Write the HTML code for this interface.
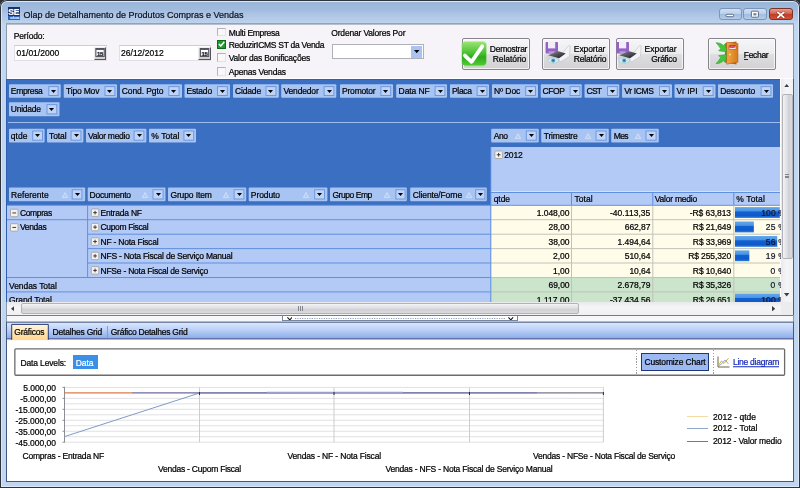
<!DOCTYPE html>
<html lang="pt-BR"><head><meta charset="utf-8"><title>Olap de Detalhamento de Produtos Compras e Vendas</title>
<style>html,body{margin:0;padding:0}body{width:800px;height:488px;overflow:hidden;background:#2c3036;position:relative;font-family:"Liberation Sans", sans-serif;font-size:8.5px;line-height:1}
#w{position:absolute;left:0;top:0;width:800px;height:488px;overflow:hidden;will-change:transform}
#w div,#w svg,#w span{position:absolute;display:block}#w span{white-space:pre;line-height:1;-webkit-text-stroke:0.22px}
#clip{left:0;top:0;width:781px;height:302px;overflow:hidden}</style></head>
<body><div id="w">
<div  style="left:0px;top:0px;width:800px;height:488px;background:#c1d6f0;border-radius:7px 7px 0 0;box-shadow:inset 0 0 0 1px #2e333c, inset 0 0 0 2px #dbe7f6"></div>
<div  style="left:2px;top:2px;width:796px;height:22px;background:linear-gradient(#9ab7da,#9fbadc 30%,#adc4e5 55%,#b5cce9 80%,#bfd5ef);border-radius:5px 5px 0 0"></div>
<div  style="left:7.5px;top:7px;width:12.5px;height:9.4px;background:#17326e"></div>
<div  style="left:7.5px;top:16.4px;width:12.5px;height:3.6px;background:#2d63b8"></div>
<span style="top:11.8px;font-size:8.6px;color:#fff;transform:translateY(-44%);left:8.2px;letter-spacing:-0.134px;font-weight:bold">SE</span>
<span style="top:18px;font-size:4.4px;color:#d6ecff;transform:translateY(-44%);left:10.2px;letter-spacing:0.151px;font-weight:bold">cios</span>
<span style="top:14.5px;font-size:9px;color:#10131c;transform:translateY(-44%);left:23.5px;letter-spacing:-0.003px;">Olap de Detalhamento de Produtos Compras e Vendas</span>
<div  style="left:718.5px;top:7.75px;width:23px;height:12.5px;background:linear-gradient(#cfe0f4,#b9d0ec 48%,#9fbde0 52%,#b4cdea);border:1px solid #7d95b6;border-radius:3px;box-sizing:border-box"></div>
<svg style="left:725px;top:13px" width="10" height="5"><rect x="1.00" y="1.30" width="7.60" height="2.40" rx="0.8" fill="#fff" stroke="#52627e" stroke-width="0.9"/></svg>
<div  style="left:743px;top:7.75px;width:23.5px;height:12.5px;background:linear-gradient(#cfe0f4,#b9d0ec 48%,#9fbde0 52%,#b4cdea);border:1px solid #7d95b6;border-radius:3px;box-sizing:border-box"></div>
<svg style="left:750px;top:10px" width="10" height="9"><rect x="1.40" y="1.20" width="7.00" height="6.00" rx="0.8" fill="#fff" stroke="#52627e" stroke-width="0.9"/></svg>
<svg style="left:752px;top:12px" width="6" height="5"><rect x="1.40" y="1.20" width="3.00" height="2.20" rx="0" fill="#6f7e96"/></svg>
<div  style="left:768.5px;top:7.75px;width:24px;height:12.5px;background:linear-gradient(#e4a093,#d4624c 45%,#c23a22 52%,#d0553c);border:1px solid #7a3326;border-radius:3px;box-sizing:border-box"></div>
<svg style="left:775.5px;top:10.5px" width="10" height="8" viewBox="0 0 10 8"><path d="M1.8 1.4L7.8 6.4M7.8 1.4L1.8 6.4" stroke="#5a2018" stroke-width="2.8" stroke-linecap="round" opacity=".5"/><path d="M1.8 1.4L7.8 6.4M7.8 1.4L1.8 6.4" stroke="#fff" stroke-width="1.7" stroke-linecap="round"/></svg>
<div  style="left:6px;top:23px;width:788px;height:459px;background:#fff;box-shadow:inset 0 0 0 1px #8b97ab"></div>
<div  style="left:7px;top:24px;width:786px;height:54px;background:#f6f4f8"></div>
<svg style="left:5px;top:22px" width="790" height="4"><rect x="1.00" y="1.40" width="788.00" height="1.30" rx="0" fill="#9fa8b8"/></svg>
<span style="top:36px;font-size:8.5px;color:#000;transform:translateY(-44%);left:13.75px;letter-spacing:-0.174px;">Período:</span>
<div  style="left:14px;top:44.5px;width:93px;height:16px;background:#fff;border:1px solid #e2e0e5;border-top-color:#cfcdd3;box-sizing:border-box"></div>
<span style="top:53px;font-size:8.5px;color:#000;transform:translateY(-44%);left:16.5px;letter-spacing:0.020px;">01/01/2000</span>
<div  style="left:93.6px;top:47px;width:12.5px;height:12.8px;background:#d3d1cd;border:1px solid;border-color:#f1efec #54545e #54545e #f1efec;box-sizing:border-box"></div>
<svg style="left:94px;top:47px" width="12" height="11"><rect x="1.90" y="1.50" width="8.30" height="7.90" rx="0" fill="#fff" stroke="#4a4a56" stroke-width="1"/></svg>
<svg style="left:94px;top:47px" width="12" height="4"><rect x="1.90" y="1.50" width="8.30" height="1.50" rx="0" fill="#5c5c68"/></svg>
<span style="top:53.6px;font-size:6px;color:#14141e;transform:translateY(-44%);left:97.1px;letter-spacing:-0.344px;font-weight:bold">15</span>
<div  style="left:118.8px;top:44.5px;width:92.7px;height:16px;background:#fff;border:1px solid #e2e0e5;border-top-color:#cfcdd3;box-sizing:border-box"></div>
<span style="top:53px;font-size:8.5px;color:#000;transform:translateY(-44%);left:121px;letter-spacing:0.020px;">26/12/2012</span>
<div  style="left:198.1px;top:47px;width:12.5px;height:12.8px;background:#d3d1cd;border:1px solid;border-color:#f1efec #54545e #54545e #f1efec;box-sizing:border-box"></div>
<svg style="left:199px;top:47px" width="11" height="11"><rect x="1.40" y="1.50" width="8.30" height="7.90" rx="0" fill="#fff" stroke="#4a4a56" stroke-width="1"/></svg>
<svg style="left:199px;top:47px" width="11" height="4"><rect x="1.40" y="1.50" width="8.30" height="1.50" rx="0" fill="#5c5c68"/></svg>
<span style="top:53.6px;font-size:6px;color:#14141e;transform:translateY(-44%);left:201.6px;letter-spacing:-0.344px;font-weight:bold">15</span>
<div  style="left:217px;top:27.5px;width:9px;height:8.75px;background:#f8f7fa;border:1px solid;border-color:#b4b2b8 #e4e2e8 #e4e2e8 #b4b2b8;box-sizing:border-box"></div>
<div  style="left:217px;top:40px;width:9px;height:8.5px;background:#1f9a2c;border:1px solid #0d6b18;box-sizing:border-box"></div>
<svg style="left:218.2px;top:41.3px" width="7" height="6" viewBox="0 0 7 6"><path d="M0.8 3L2.8 5L6.3 0.8" stroke="#fff" stroke-width="1.5" fill="none"/></svg>
<div  style="left:217px;top:53.25px;width:9px;height:8.5px;background:#f8f7fa;border:1px solid;border-color:#b4b2b8 #e4e2e8 #e4e2e8 #b4b2b8;box-sizing:border-box"></div>
<div  style="left:217px;top:66.75px;width:9px;height:8.75px;background:#f8f7fa;border:1px solid;border-color:#b4b2b8 #e4e2e8 #e4e2e8 #b4b2b8;box-sizing:border-box"></div>
<span style="top:32.5px;font-size:8.5px;color:#000;transform:translateY(-44%);left:228.75px;letter-spacing:-0.275px;">Multi Empresa</span>
<span style="top:44.7px;font-size:8.5px;color:#000;transform:translateY(-44%);left:228.75px;letter-spacing:-0.279px;">ReduzirICMS ST da Venda</span>
<span style="top:58px;font-size:8.5px;color:#000;transform:translateY(-44%);left:228.75px;letter-spacing:-0.209px;">Valor das Bonificações</span>
<span style="top:71.6px;font-size:8.5px;color:#000;transform:translateY(-44%);left:228.75px;letter-spacing:-0.197px;">Apenas Vendas</span>
<span style="top:33.4px;font-size:8.5px;color:#000;transform:translateY(-44%);left:331.25px;letter-spacing:-0.173px;">Ordenar Valores Por</span>
<div  style="left:332.2px;top:44.25px;width:91.5px;height:14.45px;background:#fff;border:1px solid #b0b0ba;box-sizing:border-box"></div>
<div  style="left:411.3px;top:45.6px;width:11.1px;height:12px;background:#a9c4f2"></div>
<svg style="left:414.15px;top:50.2px" width="5.5" height="3.2" viewBox="0 0 5.5 3.2"><path d="M0 0H5.5L2.75 3.2Z" fill="#000"/></svg>
<div  style="left:462px;top:37.7px;width:68px;height:32px;background:linear-gradient(#f6f5f7,#ececee 48%,#dedee0 52%,#d2d2d5);border:1px solid #85858c;border-radius:2px;box-sizing:border-box;box-shadow:inset 0 0 0 1px rgba(255,255,255,.7)"></div>
<div  style="left:542.3px;top:37.7px;width:67.7px;height:32px;background:linear-gradient(#f6f5f7,#ececee 48%,#dedee0 52%,#d2d2d5);border:1px solid #85858c;border-radius:2px;box-sizing:border-box;box-shadow:inset 0 0 0 1px rgba(255,255,255,.7)"></div>
<div  style="left:616.2px;top:37.7px;width:67.4px;height:32px;background:linear-gradient(#f6f5f7,#ececee 48%,#dedee0 52%,#d2d2d5);border:1px solid #85858c;border-radius:2px;box-sizing:border-box;box-shadow:inset 0 0 0 1px rgba(255,255,255,.7)"></div>
<div  style="left:708.4px;top:37.7px;width:67.4px;height:32px;background:linear-gradient(#f6f5f7,#ececee 48%,#dedee0 52%,#d2d2d5);border:1px solid #85858c;border-radius:2px;box-sizing:border-box;box-shadow:inset 0 0 0 1px rgba(255,255,255,.7)"></div>
<svg style="left:460px;top:40px" width="28" height="28" viewBox="0 0 28 28">
<defs><linearGradient id="gg" x1="0" y1="0" x2="0" y2="1"><stop offset="0" stop-color="#96e470"/><stop offset=".5" stop-color="#48be30"/><stop offset=".64" stop-color="#2eaa1c"/><stop offset="1" stop-color="#50cc32"/></linearGradient></defs>
<rect x="1" y="1" width="26" height="25.4" rx="4.5" fill="#8fdc74" opacity=".4"/>
<rect x="2" y="2" width="24.2" height="23.4" rx="3.6" fill="url(#gg)"/>
<path d="M4.9 15.6L11.5 21.8L22.2 6.3" stroke="#fff" stroke-width="3.8" fill="none" stroke-linecap="round" stroke-linejoin="round"/></svg>
<span style="top:49.4px;font-size:8.5px;color:#000;transform:translateY(-44%);left:489.8px;letter-spacing:-0.254px;">Demostrar</span>
<span style="top:59.2px;font-size:8.5px;color:#000;transform:translateY(-44%);left:492.7px;letter-spacing:-0.059px;">Relatório</span>
<svg style="left:544px;top:40px" width="28" height="28" viewBox="0 0 28 28">
<defs><linearGradient id="pg544" x1="0" y1="0" x2="1" y2="1"><stop offset="0" stop-color="#8a8c94"/><stop offset="1" stop-color="#16171c"/></linearGradient></defs>
<rect x="1.6" y="2" width="12.4" height="11.6" rx=".8" fill="#9461c6"/><rect x="4" y="1.8" width="7.2" height="6.6" fill="#f1ecf8"/><rect x="4.6" y="11.2" width="6" height="2.6" fill="#b698dc"/>
<path d="M14.4 18.3L24.9 5.4L26.1 6L25.5 16.4L16.3 22Z" fill="#f4f4f6" stroke="#bdbdc4" stroke-width=".6"/>
<path d="M2.5 16.5L4 15.2L15 18.3L16.3 22L15.5 24L2.5 19.5Z" fill="#d4d5da"/>
<path d="M4 15.2L14.4 11.2L21.8 13.4L15 18.3Z" fill="url(#pg544)"/>
<ellipse cx="9.2" cy="20.5" rx="5.4" ry="2.7" fill="#d3e8ef" stroke="#9bbccc" stroke-width=".5"/><circle cx="9.2" cy="20.5" r="2" fill="#4aa0c0"/><circle cx="9.2" cy="20.5" r=".8" fill="#286884"/>
</svg>
<svg style="left:615.4px;top:40px" width="28" height="28" viewBox="0 0 28 28">
<defs><linearGradient id="pg615" x1="0" y1="0" x2="1" y2="1"><stop offset="0" stop-color="#8a8c94"/><stop offset="1" stop-color="#16171c"/></linearGradient></defs>
<rect x="1.6" y="2" width="12.4" height="11.6" rx=".8" fill="#9461c6"/><rect x="4" y="1.8" width="7.2" height="6.6" fill="#f1ecf8"/><rect x="4.6" y="11.2" width="6" height="2.6" fill="#b698dc"/>
<path d="M14.4 18.3L24.9 5.4L26.1 6L25.5 16.4L16.3 22Z" fill="#f4f4f6" stroke="#bdbdc4" stroke-width=".6"/>
<path d="M2.5 16.5L4 15.2L15 18.3L16.3 22L15.5 24L2.5 19.5Z" fill="#d4d5da"/>
<path d="M4 15.2L14.4 11.2L21.8 13.4L15 18.3Z" fill="url(#pg615)"/>
<ellipse cx="9.2" cy="20.5" rx="5.4" ry="2.7" fill="#d3e8ef" stroke="#9bbccc" stroke-width=".5"/><circle cx="9.2" cy="20.5" r="2" fill="#4aa0c0"/><circle cx="9.2" cy="20.5" r=".8" fill="#286884"/>
</svg>
<span style="top:49.4px;font-size:8.5px;color:#000;transform:translateY(-44%);left:573.8px;letter-spacing:-0.078px;">Exportar</span>
<span style="top:59.2px;font-size:8.5px;color:#000;transform:translateY(-44%);left:573.8px;letter-spacing:-0.181px;">Relatório</span>
<span style="top:49.4px;font-size:8.5px;color:#000;transform:translateY(-44%);left:644.6px;letter-spacing:-0.016px;">Exportar</span>
<span style="top:59.2px;font-size:8.5px;color:#000;transform:translateY(-44%);left:651.3px;letter-spacing:-0.301px;">Gráfico</span>
<svg style="left:714px;top:40px" width="28" height="28" viewBox="0 0 28 28">
<defs><linearGradient id="dg" x1="0" y1="0" x2="1" y2="0"><stop offset="0" stop-color="#f2a544"/><stop offset="1" stop-color="#d87a1a"/></linearGradient></defs>
<path d="M11 3.2L22.5 1.6V24.4L11 22.6Z" fill="#b8651a"/>
<path d="M12.6 2.2L24 3.6V22.2L12.6 24.2Z" fill="url(#dg)" stroke="#a85a12" stroke-width=".5"/>
<rect x="15" y="6" width="7" height="3.4" fill="#fbe3e6" stroke="#d23a4a" stroke-width=".6"/>
<circle cx="16" cy="14.6" r="1" fill="#ffe28a"/>
<path d="M2 2.8C5 2.6 7.6 3.6 9.4 5.6L11.2 3.8L12.8 12L4.6 10.8L6.6 8.8C5.4 6.6 3.8 4.6 2 2.8Z" fill="#46c43e" stroke="#2e9e2c" stroke-width=".5"/>
<path d="M2 23.6C5 23.8 7.6 22.8 9.4 20.8L11.2 22.6L12.8 14.4L4.6 15.6L6.6 17.6C5.4 19.8 3.8 21.8 2 23.6Z" fill="#46c43e" stroke="#2e9e2c" stroke-width=".5"/>
</svg>
<span style="top:47.8px;font-size:2.6px;color:#d01f36;transform:translateY(-44%);left:729.4px;letter-spacing:0.109px;font-weight:bold">EXIT</span>
<span style="top:55px;font-size:8.5px;color:#000;transform:translateY(-44%);left:743.8px;letter-spacing:-0.311px;">Fechar</span>
<div  style="left:743.8px;top:59.3px;width:3.8px;height:0.7px;background:#222"></div>
<div  style="left:7px;top:78px;width:786px;height:1px;background:#fff"></div>
<div id="clip">
<div  style="left:6px;top:79px;width:774px;height:223px;background:#3a6fc1;box-shadow:inset 1px 1px 0 #2f5fae"></div>
<svg style="left:8px;top:83px" width="54" height="16"><rect x="1.00" y="1.30" width="51.75" height="13.50" rx="1" fill="#a8c4f2"/></svg>
<span style="top:91.25px;font-size:8.5px;color:#000;transform:translateY(-44%);left:10.8px;letter-spacing:-0.331px;">Empresa</span>
<svg style="left:47px;top:85px" width="13" height="12"><rect x="1.80" y="1.60" width="9.30" height="8.90" rx="0" fill="#bdd3f8" stroke="#6e98de" stroke-width="1"/></svg>
<svg style="left:50.95px;top:89.75px" width="5" height="3" viewBox="0 0 5 3"><path d="M0 0H5L2.5 3Z" fill="#000"/></svg>
<svg style="left:62px;top:83px" width="56" height="16"><rect x="1.75" y="1.30" width="53.25" height="13.50" rx="1" fill="#a8c4f2"/></svg>
<span style="top:91.25px;font-size:8.5px;color:#000;transform:translateY(-44%);left:66px;letter-spacing:-0.180px;">Tipo Mov</span>
<svg style="left:104px;top:85px" width="12" height="12"><rect x="1.00" y="1.60" width="9.90" height="8.90" rx="0" fill="#bdd3f8" stroke="#6e98de" stroke-width="1"/></svg>
<svg style="left:107.45px;top:89.75px" width="5" height="3" viewBox="0 0 5 3"><path d="M0 0H5L2.5 3Z" fill="#000"/></svg>
<svg style="left:119px;top:83px" width="64" height="16"><rect x="1.00" y="1.30" width="62.00" height="13.50" rx="1" fill="#a8c4f2"/></svg>
<span style="top:91.25px;font-size:8.5px;color:#000;transform:translateY(-44%);left:121.8px;letter-spacing:-0.103px;">Cond. Pgto</span>
<svg style="left:167px;top:85px" width="14" height="12"><rect x="1.80" y="1.60" width="10.30" height="8.90" rx="0" fill="#bdd3f8" stroke="#6e98de" stroke-width="1"/></svg>
<svg style="left:171.45px;top:89.75px" width="5" height="3" viewBox="0 0 5 3"><path d="M0 0H5L2.5 3Z" fill="#000"/></svg>
<svg style="left:183px;top:83px" width="48" height="16"><rect x="1.50" y="1.30" width="45.50" height="13.50" rx="1" fill="#a8c4f2"/></svg>
<span style="top:91.25px;font-size:8.5px;color:#000;transform:translateY(-44%);left:186.5px;letter-spacing:-0.161px;">Estado</span>
<svg style="left:216px;top:85px" width="13" height="12"><rect x="1.50" y="1.60" width="9.80" height="8.90" rx="0" fill="#bdd3f8" stroke="#6e98de" stroke-width="1"/></svg>
<svg style="left:219.9px;top:89.75px" width="5" height="3" viewBox="0 0 5 3"><path d="M0 0H5L2.5 3Z" fill="#000"/></svg>
<svg style="left:232px;top:83px" width="48" height="16"><rect x="1.00" y="1.30" width="45.80" height="13.50" rx="1" fill="#a8c4f2"/></svg>
<span style="top:91.25px;font-size:8.5px;color:#000;transform:translateY(-44%);left:235px;letter-spacing:-0.156px;">Cidade</span>
<svg style="left:265px;top:85px" width="12" height="12"><rect x="1.00" y="1.60" width="9.90" height="8.90" rx="0" fill="#bdd3f8" stroke="#6e98de" stroke-width="1"/></svg>
<svg style="left:268.45px;top:89.75px" width="5" height="3" viewBox="0 0 5 3"><path d="M0 0H5L2.5 3Z" fill="#000"/></svg>
<svg style="left:280px;top:83px" width="58" height="16"><rect x="1.20" y="1.30" width="55.10" height="13.50" rx="1" fill="#a8c4f2"/></svg>
<span style="top:91.25px;font-size:8.5px;color:#000;transform:translateY(-44%);left:283.5px;letter-spacing:-0.163px;">Vendedor</span>
<svg style="left:323px;top:85px" width="12" height="12"><rect x="1.10" y="1.60" width="9.80" height="8.90" rx="0" fill="#bdd3f8" stroke="#6e98de" stroke-width="1"/></svg>
<svg style="left:326.5px;top:89.75px" width="5" height="3" viewBox="0 0 5 3"><path d="M0 0H5L2.5 3Z" fill="#000"/></svg>
<svg style="left:339px;top:83px" width="55" height="16"><rect x="1.00" y="1.30" width="53.00" height="13.50" rx="1" fill="#a8c4f2"/></svg>
<span style="top:91.25px;font-size:8.5px;color:#000;transform:translateY(-44%);left:342px;letter-spacing:-0.196px;">Promotor</span>
<svg style="left:379px;top:85px" width="13" height="12"><rect x="1.90" y="1.60" width="9.80" height="8.90" rx="0" fill="#bdd3f8" stroke="#6e98de" stroke-width="1"/></svg>
<svg style="left:383.3px;top:89.75px" width="5" height="3" viewBox="0 0 5 3"><path d="M0 0H5L2.5 3Z" fill="#000"/></svg>
<svg style="left:395px;top:83px" width="53" height="16"><rect x="1.20" y="1.30" width="50.80" height="13.50" rx="1" fill="#a8c4f2"/></svg>
<span style="top:91.25px;font-size:8.5px;color:#000;transform:translateY(-44%);left:398.6px;letter-spacing:-0.094px;">Data NF</span>
<svg style="left:434px;top:85px" width="12" height="12"><rect x="1.10" y="1.60" width="9.80" height="8.90" rx="0" fill="#bdd3f8" stroke="#6e98de" stroke-width="1"/></svg>
<svg style="left:437.5px;top:89.75px" width="5" height="3" viewBox="0 0 5 3"><path d="M0 0H5L2.5 3Z" fill="#000"/></svg>
<svg style="left:449px;top:83px" width="41" height="16"><rect x="1.00" y="1.30" width="39.00" height="13.50" rx="1" fill="#a8c4f2"/></svg>
<span style="top:91.25px;font-size:8.5px;color:#000;transform:translateY(-44%);left:452px;letter-spacing:-0.333px;">Placa</span>
<svg style="left:476px;top:85px" width="12" height="12"><rect x="1.10" y="1.60" width="9.80" height="8.90" rx="0" fill="#bdd3f8" stroke="#6e98de" stroke-width="1"/></svg>
<svg style="left:479.5px;top:89.75px" width="5" height="3" viewBox="0 0 5 3"><path d="M0 0H5L2.5 3Z" fill="#000"/></svg>
<svg style="left:491px;top:83px" width="48" height="16"><rect x="1.00" y="1.30" width="46.00" height="13.50" rx="1" fill="#a8c4f2"/></svg>
<span style="top:91.25px;font-size:8.5px;color:#000;transform:translateY(-44%);left:494px;letter-spacing:-0.089px;">Nº Doc</span>
<svg style="left:524px;top:85px" width="13" height="12"><rect x="1.70" y="1.60" width="9.80" height="8.90" rx="0" fill="#bdd3f8" stroke="#6e98de" stroke-width="1"/></svg>
<svg style="left:528.1px;top:89.75px" width="5" height="3" viewBox="0 0 5 3"><path d="M0 0H5L2.5 3Z" fill="#000"/></svg>
<svg style="left:539px;top:83px" width="44" height="16"><rect x="1.70" y="1.30" width="41.10" height="13.50" rx="1" fill="#a8c4f2"/></svg>
<span style="top:91.25px;font-size:8.5px;color:#000;transform:translateY(-44%);left:542.6px;letter-spacing:-0.406px;">CFOP</span>
<svg style="left:569px;top:85px" width="12" height="12"><rect x="1.10" y="1.60" width="9.80" height="8.90" rx="0" fill="#bdd3f8" stroke="#6e98de" stroke-width="1"/></svg>
<svg style="left:572.5px;top:89.75px" width="5" height="3" viewBox="0 0 5 3"><path d="M0 0H5L2.5 3Z" fill="#000"/></svg>
<svg style="left:583px;top:83px" width="38" height="16"><rect x="1.50" y="1.30" width="34.80" height="13.50" rx="1" fill="#a8c4f2"/></svg>
<span style="top:91.25px;font-size:8.5px;color:#000;transform:translateY(-44%);left:586.6px;letter-spacing:-0.800px;">CST</span>
<svg style="left:606px;top:85px" width="13" height="12"><rect x="1.50" y="1.60" width="9.80" height="8.90" rx="0" fill="#bdd3f8" stroke="#6e98de" stroke-width="1"/></svg>
<svg style="left:609.9px;top:89.75px" width="5" height="3" viewBox="0 0 5 3"><path d="M0 0H5L2.5 3Z" fill="#000"/></svg>
<svg style="left:621px;top:83px" width="52" height="16"><rect x="1.00" y="1.30" width="50.00" height="13.50" rx="1" fill="#a8c4f2"/></svg>
<span style="top:91.25px;font-size:8.5px;color:#000;transform:translateY(-44%);left:624.2px;letter-spacing:-0.342px;">Vr ICMS</span>
<svg style="left:658px;top:85px" width="13" height="12"><rect x="1.50" y="1.60" width="9.80" height="8.90" rx="0" fill="#bdd3f8" stroke="#6e98de" stroke-width="1"/></svg>
<svg style="left:661.9px;top:89.75px" width="5" height="3" viewBox="0 0 5 3"><path d="M0 0H5L2.5 3Z" fill="#000"/></svg>
<svg style="left:673px;top:83px" width="44" height="16"><rect x="1.50" y="1.30" width="41.00" height="13.50" rx="1" fill="#a8c4f2"/></svg>
<span style="top:91.25px;font-size:8.5px;color:#000;transform:translateY(-44%);left:676.6px;letter-spacing:0.008px;">Vr IPI</span>
<svg style="left:702px;top:85px" width="13" height="12"><rect x="1.30" y="1.60" width="9.80" height="8.90" rx="0" fill="#bdd3f8" stroke="#6e98de" stroke-width="1"/></svg>
<svg style="left:705.7px;top:89.75px" width="5" height="3" viewBox="0 0 5 3"><path d="M0 0H5L2.5 3Z" fill="#000"/></svg>
<svg style="left:717px;top:83px" width="57" height="16"><rect x="1.00" y="1.30" width="55.00" height="13.50" rx="1" fill="#a8c4f2"/></svg>
<span style="top:91.25px;font-size:8.5px;color:#000;transform:translateY(-44%);left:720.2px;letter-spacing:-0.140px;">Desconto</span>
<svg style="left:760px;top:85px" width="12" height="12"><rect x="1.10" y="1.60" width="9.80" height="8.90" rx="0" fill="#bdd3f8" stroke="#6e98de" stroke-width="1"/></svg>
<svg style="left:763.5px;top:89.75px" width="5" height="3" viewBox="0 0 5 3"><path d="M0 0H5L2.5 3Z" fill="#000"/></svg>
<svg style="left:8px;top:101px" width="53" height="17"><rect x="1.00" y="1.30" width="50.50" height="13.90" rx="1" fill="#a8c4f2"/></svg>
<span style="top:109.45px;font-size:8.5px;color:#000;transform:translateY(-44%);left:10.8px;letter-spacing:-0.239px;">Unidade</span>
<svg style="left:46px;top:103px" width="12" height="12"><rect x="1.00" y="1.60" width="9.80" height="9.30" rx="0" fill="#bdd3f8" stroke="#6e98de" stroke-width="1"/></svg>
<svg style="left:49.4px;top:107.95px" width="5" height="3" viewBox="0 0 5 3"><path d="M0 0H5L2.5 3Z" fill="#000"/></svg>
<div  style="left:8.3px;top:122.3px;width:771.7px;height:1px;background:#9dbcf0"></div>
<svg style="left:8px;top:127px" width="38" height="17"><rect x="1.00" y="1.70" width="35.60" height="13.80" rx="1" fill="#a8c4f2"/></svg>
<span style="top:135.8px;font-size:8.5px;color:#000;transform:translateY(-44%);left:10.8px;letter-spacing:0.063px;">qtde</span>
<svg style="left:31px;top:130px" width="13" height="12"><rect x="1.70" y="1.00" width="9.80" height="9.20" rx="0" fill="#bdd3f8" stroke="#6e98de" stroke-width="1"/></svg>
<svg style="left:35.1px;top:134.3px" width="5" height="3" viewBox="0 0 5 3"><path d="M0 0H5L2.5 3Z" fill="#000"/></svg>
<svg style="left:46px;top:127px" width="39" height="17"><rect x="1.00" y="1.70" width="36.40" height="13.80" rx="1" fill="#a8c4f2"/></svg>
<span style="top:135.8px;font-size:8.5px;color:#000;transform:translateY(-44%);left:49px;letter-spacing:-0.074px;">Total</span>
<svg style="left:70px;top:130px" width="12" height="12"><rect x="1.10" y="1.00" width="9.80" height="9.20" rx="0" fill="#bdd3f8" stroke="#6e98de" stroke-width="1"/></svg>
<svg style="left:73.5px;top:134.3px" width="5" height="3" viewBox="0 0 5 3"><path d="M0 0H5L2.5 3Z" fill="#000"/></svg>
<svg style="left:85px;top:127px" width="63" height="17"><rect x="1.00" y="1.70" width="60.40" height="13.80" rx="1" fill="#a8c4f2"/></svg>
<span style="top:135.8px;font-size:8.5px;color:#000;transform:translateY(-44%);left:88px;letter-spacing:-0.285px;">Valor medio</span>
<svg style="left:133px;top:130px" width="12" height="12"><rect x="1.10" y="1.00" width="9.80" height="9.20" rx="0" fill="#bdd3f8" stroke="#6e98de" stroke-width="1"/></svg>
<svg style="left:136.5px;top:134.3px" width="5" height="3" viewBox="0 0 5 3"><path d="M0 0H5L2.5 3Z" fill="#000"/></svg>
<svg style="left:148px;top:127px" width="49" height="17"><rect x="1.00" y="1.70" width="47.00" height="13.80" rx="1" fill="#a8c4f2"/></svg>
<span style="top:135.8px;font-size:8.5px;color:#000;transform:translateY(-44%);left:151.2px;letter-spacing:0.095px;">% Total</span>
<svg style="left:182px;top:130px" width="13" height="12"><rect x="1.90" y="1.00" width="9.80" height="9.20" rx="0" fill="#bdd3f8" stroke="#6e98de" stroke-width="1"/></svg>
<svg style="left:186.3px;top:134.3px" width="5" height="3" viewBox="0 0 5 3"><path d="M0 0H5L2.5 3Z" fill="#000"/></svg>
<svg style="left:490px;top:127px" width="50" height="17"><rect x="1.20" y="1.70" width="47.60" height="13.80" rx="1" fill="#a8c4f2"/></svg>
<span style="top:135.8px;font-size:8.5px;color:#000;transform:translateY(-44%);left:493.8px;letter-spacing:-0.475px;">Ano</span>
<svg style="left:525px;top:130px" width="13" height="12"><rect x="1.30" y="1.00" width="10.00" height="9.20" rx="0" fill="#bdd3f8" stroke="#6e98de" stroke-width="1"/></svg>
<svg style="left:528.8px;top:134.3px" width="5" height="3" viewBox="0 0 5 3"><path d="M0 0H5L2.5 3Z" fill="#000"/></svg>
<svg style="left:515px;top:132.8px" width="6" height="6" viewBox="0 0 6 6"><path d="M3 0.5L5.7 5.6H0.3Z" fill="#b4ccf5" stroke="#e3edfc" stroke-width="0.6"/></svg>
<svg style="left:540px;top:127px" width="70" height="17"><rect x="1.20" y="1.70" width="67.60" height="13.80" rx="1" fill="#a8c4f2"/></svg>
<span style="top:135.8px;font-size:8.5px;color:#000;transform:translateY(-44%);left:543.8px;letter-spacing:-0.209px;">Trimestre</span>
<svg style="left:595px;top:130px" width="13" height="12"><rect x="1.00" y="1.00" width="10.10" height="9.20" rx="0" fill="#bdd3f8" stroke="#6e98de" stroke-width="1"/></svg>
<svg style="left:598.55px;top:134.3px" width="5" height="3" viewBox="0 0 5 3"><path d="M0 0H5L2.5 3Z" fill="#000"/></svg>
<svg style="left:585px;top:132.8px" width="6" height="6" viewBox="0 0 6 6"><path d="M3 0.5L5.7 5.6H0.3Z" fill="#b4ccf5" stroke="#e3edfc" stroke-width="0.6"/></svg>
<svg style="left:610px;top:127px" width="50" height="17"><rect x="1.20" y="1.70" width="47.60" height="13.80" rx="1" fill="#a8c4f2"/></svg>
<span style="top:135.8px;font-size:8.5px;color:#000;transform:translateY(-44%);left:613.8px;letter-spacing:-0.621px;">Mes</span>
<svg style="left:645px;top:130px" width="13" height="12"><rect x="1.00" y="1.00" width="10.10" height="9.20" rx="0" fill="#bdd3f8" stroke="#6e98de" stroke-width="1"/></svg>
<svg style="left:648.55px;top:134.3px" width="5" height="3" viewBox="0 0 5 3"><path d="M0 0H5L2.5 3Z" fill="#000"/></svg>
<svg style="left:635px;top:132.8px" width="6" height="6" viewBox="0 0 6 6"><path d="M3 0.5L5.7 5.6H0.3Z" fill="#b4ccf5" stroke="#e3edfc" stroke-width="0.6"/></svg>
<svg style="left:8px;top:186px" width="79" height="17"><rect x="1.00" y="1.40" width="76.20" height="13.90" rx="1" fill="#a8c4f2"/></svg>
<span style="top:194.55px;font-size:8.5px;color:#000;transform:translateY(-44%);left:11px;letter-spacing:0.051px;">Referente</span>
<svg style="left:71px;top:188px" width="12" height="12"><rect x="1.20" y="1.70" width="9.70" height="9.30" rx="0" fill="#bdd3f8" stroke="#6e98de" stroke-width="1"/></svg>
<svg style="left:74.55px;top:193.05px" width="5" height="3" viewBox="0 0 5 3"><path d="M0 0H5L2.5 3Z" fill="#000"/></svg>
<svg style="left:61.5px;top:191.55px" width="6" height="6" viewBox="0 0 6 6"><path d="M3 0.5L5.7 5.6H0.3Z" fill="#b4ccf5" stroke="#e3edfc" stroke-width="0.6"/></svg>
<svg style="left:86px;top:186px" width="81" height="17"><rect x="1.70" y="1.40" width="77.80" height="13.90" rx="1" fill="#a8c4f2"/></svg>
<span style="top:194.55px;font-size:8.5px;color:#000;transform:translateY(-44%);left:89.6px;letter-spacing:-0.252px;">Documento</span>
<svg style="left:152px;top:188px" width="13" height="12"><rect x="1.00" y="1.70" width="10.10" height="9.30" rx="0" fill="#bdd3f8" stroke="#6e98de" stroke-width="1"/></svg>
<svg style="left:155.55px;top:193.05px" width="5" height="3" viewBox="0 0 5 3"><path d="M0 0H5L2.5 3Z" fill="#000"/></svg>
<svg style="left:142px;top:191.55px" width="6" height="6" viewBox="0 0 6 6"><path d="M3 0.5L5.7 5.6H0.3Z" fill="#b4ccf5" stroke="#e3edfc" stroke-width="0.6"/></svg>
<svg style="left:167px;top:186px" width="81" height="17"><rect x="1.00" y="1.40" width="78.20" height="13.90" rx="1" fill="#a8c4f2"/></svg>
<span style="top:194.55px;font-size:8.5px;color:#000;transform:translateY(-44%);left:170.4px;letter-spacing:-0.113px;">Grupo Item</span>
<svg style="left:233px;top:188px" width="12" height="12"><rect x="1.10" y="1.70" width="9.80" height="9.30" rx="0" fill="#bdd3f8" stroke="#6e98de" stroke-width="1"/></svg>
<svg style="left:236.5px;top:193.05px" width="5" height="3" viewBox="0 0 5 3"><path d="M0 0H5L2.5 3Z" fill="#000"/></svg>
<svg style="left:223.2px;top:191.55px" width="6" height="6" viewBox="0 0 6 6"><path d="M3 0.5L5.7 5.6H0.3Z" fill="#b4ccf5" stroke="#e3edfc" stroke-width="0.6"/></svg>
<svg style="left:247px;top:186px" width="82" height="17"><rect x="1.70" y="1.40" width="78.70" height="13.90" rx="1" fill="#a8c4f2"/></svg>
<span style="top:194.55px;font-size:8.5px;color:#000;transform:translateY(-44%);left:250.8px;letter-spacing:-0.083px;">Produto</span>
<svg style="left:313px;top:188px" width="13" height="12"><rect x="1.70" y="1.70" width="9.80" height="9.30" rx="0" fill="#bdd3f8" stroke="#6e98de" stroke-width="1"/></svg>
<svg style="left:317.1px;top:193.05px" width="5" height="3" viewBox="0 0 5 3"><path d="M0 0H5L2.5 3Z" fill="#000"/></svg>
<svg style="left:303.4px;top:191.55px" width="6" height="6" viewBox="0 0 6 6"><path d="M3 0.5L5.7 5.6H0.3Z" fill="#b4ccf5" stroke="#e3edfc" stroke-width="0.6"/></svg>
<svg style="left:329px;top:186px" width="79" height="17"><rect x="1.00" y="1.40" width="76.80" height="13.90" rx="1" fill="#a8c4f2"/></svg>
<span style="top:194.55px;font-size:8.5px;color:#000;transform:translateY(-44%);left:332.4px;letter-spacing:-0.452px;">Grupo Emp</span>
<svg style="left:394px;top:188px" width="13" height="12"><rect x="1.90" y="1.70" width="9.20" height="9.30" rx="0" fill="#bdd3f8" stroke="#6e98de" stroke-width="1"/></svg>
<svg style="left:398px;top:193.05px" width="5" height="3" viewBox="0 0 5 3"><path d="M0 0H5L2.5 3Z" fill="#000"/></svg>
<svg style="left:384.4px;top:191.55px" width="6" height="6" viewBox="0 0 6 6"><path d="M3 0.5L5.7 5.6H0.3Z" fill="#b4ccf5" stroke="#e3edfc" stroke-width="0.6"/></svg>
<svg style="left:409px;top:186px" width="79" height="17"><rect x="1.20" y="1.40" width="76.60" height="13.90" rx="1" fill="#a8c4f2"/></svg>
<span style="top:194.55px;font-size:8.5px;color:#000;transform:translateY(-44%);left:412.8px;letter-spacing:-0.141px;">Cliente/Forne</span>
<svg style="left:474px;top:188px" width="12" height="12"><rect x="1.70" y="1.70" width="9.20" height="9.30" rx="0" fill="#bdd3f8" stroke="#6e98de" stroke-width="1"/></svg>
<svg style="left:477.8px;top:193.05px" width="5" height="3" viewBox="0 0 5 3"><path d="M0 0H5L2.5 3Z" fill="#000"/></svg>
<svg style="left:465.8px;top:191.55px" width="6" height="6" viewBox="0 0 6 6"><path d="M3 0.5L5.7 5.6H0.3Z" fill="#b4ccf5" stroke="#e3edfc" stroke-width="0.6"/></svg>
<div  style="left:490.6px;top:147px;width:289.4px;height:58.4px;background:#b4caf6"></div>
<div  style="left:490.6px;top:190.6px;width:289.4px;height:1px;background:#d3e2fb"></div>
<div  style="left:490.6px;top:191.6px;width:289.4px;height:0.8px;background:#5f90de"></div>
<svg style="left:493px;top:150px" width="11" height="11"><rect x="1.90" y="1.00" width="7.5" height="7.5" rx="0.8" fill="#f4f3f1" stroke="#a4a3a1" stroke-width="0.9"/><path d="M3.80 4.75H7.50" stroke="#2a2a2a" stroke-width="0.9"/><path d="M5.65 2.90V6.60" stroke="#2a2a2a" stroke-width="0.9"/></svg>
<span style="top:155px;font-size:8.5px;color:#000;transform:translateY(-44%);left:504.3px;letter-spacing:-0.180px;">2012</span>
<span style="top:198.8px;font-size:8.5px;color:#000;transform:translateY(-44%);left:493.7px;letter-spacing:-0.062px;">qtde</span>
<span style="top:198.8px;font-size:8.5px;color:#000;transform:translateY(-44%);left:574.6px;letter-spacing:0.026px;">Total</span>
<span style="top:198.8px;font-size:8.5px;color:#000;transform:translateY(-44%);left:654.8px;letter-spacing:-0.230px;">Valor medio</span>
<span style="top:198.8px;font-size:8.5px;color:#000;transform:translateY(-44%);left:736.3px;letter-spacing:0.138px;">% Total</span>
<div  style="left:7px;top:205.4px;width:483.6px;height:96.6px;background:#b4caf6"></div>
<div  style="left:490.6px;top:205.4px;width:289.4px;height:72.1px;background:#fffde9"></div>
<div  style="left:490.6px;top:277.5px;width:289.4px;height:24.5px;background:#cbe4cc"></div>
<svg style="left:6px;top:203px" width="486" height="4"><rect x="1.00" y="1.80" width="483.60" height="1.00" rx="0" fill="#5f90de"/></svg>
<svg style="left:489px;top:203px" width="292" height="4"><rect x="1.60" y="1.80" width="289.40" height="1.00" rx="0" fill="#5f90de"/></svg>
<svg style="left:6px;top:218px" width="486" height="4"><rect x="1.00" y="1.20" width="483.60" height="1.00" rx="0" fill="#5f90de"/></svg>
<svg style="left:489px;top:218px" width="292" height="4"><rect x="1.60" y="1.20" width="289.40" height="1.00" rx="0" fill="#c2c2ba"/></svg>
<svg style="left:86px;top:232px" width="406" height="4"><rect x="1.60" y="1.70" width="403.00" height="1.00" rx="0" fill="#5f90de"/></svg>
<svg style="left:489px;top:232px" width="292" height="4"><rect x="1.60" y="1.70" width="289.40" height="1.00" rx="0" fill="#c2c2ba"/></svg>
<svg style="left:86px;top:247px" width="406" height="4"><rect x="1.60" y="1.10" width="403.00" height="1.00" rx="0" fill="#5f90de"/></svg>
<svg style="left:489px;top:247px" width="292" height="4"><rect x="1.60" y="1.10" width="289.40" height="1.00" rx="0" fill="#c2c2ba"/></svg>
<svg style="left:86px;top:261px" width="406" height="4"><rect x="1.60" y="1.50" width="403.00" height="1.00" rx="0" fill="#5f90de"/></svg>
<svg style="left:489px;top:261px" width="292" height="4"><rect x="1.60" y="1.50" width="289.40" height="1.00" rx="0" fill="#c2c2ba"/></svg>
<svg style="left:6px;top:276px" width="486" height="3"><rect x="1.00" y="1.00" width="483.60" height="1.00" rx="0" fill="#5f90de"/></svg>
<svg style="left:489px;top:276px" width="292" height="3"><rect x="1.60" y="1.00" width="289.40" height="1.00" rx="0" fill="#c2c2ba"/></svg>
<svg style="left:6px;top:290px" width="486" height="4"><rect x="1.00" y="1.40" width="483.60" height="1.00" rx="0" fill="#5f90de"/></svg>
<svg style="left:489px;top:290px" width="292" height="4"><rect x="1.60" y="1.40" width="289.40" height="1.00" rx="0" fill="#c2c2ba"/></svg>
<svg style="left:86px;top:204px" width="4" height="75"><rect x="1.10" y="1.30" width="1.00" height="72.20" rx="0" fill="#5f90de"/></svg>
<svg style="left:489px;top:146px" width="4" height="157"><rect x="1.30" y="1.00" width="1.00" height="155.00" rx="0" fill="#5f90de"/></svg>
<svg style="left:570px;top:204px" width="3" height="99"><rect x="1.00" y="1.30" width="1.00" height="96.70" rx="0" fill="#c2c2ba"/></svg>
<svg style="left:570px;top:191px" width="3" height="16"><rect x="1.00" y="1.00" width="1.00" height="13.30" rx="0" fill="#5f90de"/></svg>
<svg style="left:651px;top:204px" width="4" height="99"><rect x="1.30" y="1.30" width="1.00" height="96.70" rx="0" fill="#c2c2ba"/></svg>
<svg style="left:651px;top:191px" width="4" height="16"><rect x="1.30" y="1.00" width="1.00" height="13.30" rx="0" fill="#5f90de"/></svg>
<svg style="left:732px;top:204px" width="4" height="99"><rect x="1.30" y="1.30" width="1.00" height="96.70" rx="0" fill="#c2c2ba"/></svg>
<svg style="left:732px;top:191px" width="4" height="16"><rect x="1.30" y="1.00" width="1.00" height="13.30" rx="0" fill="#5f90de"/></svg>
<svg style="left:9px;top:208px" width="11" height="11"><rect x="1.50" y="1.20" width="7.5" height="7.5" rx="0.8" fill="#f4f3f1" stroke="#a4a3a1" stroke-width="0.9"/><path d="M3.40 4.95H7.10" stroke="#2a2a2a" stroke-width="0.9"/></svg>
<span style="top:212.8px;font-size:8.5px;color:#000;transform:translateY(-44%);left:20px;letter-spacing:-0.383px;">Compras</span>
<svg style="left:9px;top:222px" width="11" height="11"><rect x="1.50" y="1.70" width="7.5" height="7.5" rx="0.8" fill="#f4f3f1" stroke="#a4a3a1" stroke-width="0.9"/><path d="M3.40 5.45H7.10" stroke="#2a2a2a" stroke-width="0.9"/></svg>
<span style="top:227.4px;font-size:8.5px;color:#000;transform:translateY(-44%);left:20px;letter-spacing:-0.346px;">Vendas</span>
<svg style="left:90px;top:207px" width="11" height="11"><rect x="1.30" y="1.90" width="7.5" height="7.5" rx="0.8" fill="#f4f3f1" stroke="#a4a3a1" stroke-width="0.9"/><path d="M3.20 5.65H6.90" stroke="#2a2a2a" stroke-width="0.9"/><path d="M5.05 3.80V7.50" stroke="#2a2a2a" stroke-width="0.9"/></svg>
<span style="top:212.9px;font-size:8.5px;color:#000;transform:translateY(-44%);left:100.5px;letter-spacing:-0.217px;">Entrada NF</span>
<svg style="left:90px;top:222px" width="11" height="11"><rect x="1.30" y="1.35" width="7.5" height="7.5" rx="0.8" fill="#f4f3f1" stroke="#a4a3a1" stroke-width="0.9"/><path d="M3.20 5.10H6.90" stroke="#2a2a2a" stroke-width="0.9"/><path d="M5.05 3.25V6.95" stroke="#2a2a2a" stroke-width="0.9"/></svg>
<span style="top:227.35px;font-size:8.5px;color:#000;transform:translateY(-44%);left:100.5px;letter-spacing:-0.347px;">Cupom Fiscal</span>
<svg style="left:90px;top:236px" width="11" height="11"><rect x="1.30" y="1.80" width="7.5" height="7.5" rx="0.8" fill="#f4f3f1" stroke="#a4a3a1" stroke-width="0.9"/><path d="M3.20 5.55H6.90" stroke="#2a2a2a" stroke-width="0.9"/><path d="M5.05 3.70V7.40" stroke="#2a2a2a" stroke-width="0.9"/></svg>
<span style="top:241.8px;font-size:8.5px;color:#000;transform:translateY(-44%);left:100.5px;letter-spacing:-0.225px;">NF - Nota Fiscal</span>
<svg style="left:90px;top:251px" width="11" height="11"><rect x="1.30" y="1.20" width="7.5" height="7.5" rx="0.8" fill="#f4f3f1" stroke="#a4a3a1" stroke-width="0.9"/><path d="M3.20 4.95H6.90" stroke="#2a2a2a" stroke-width="0.9"/><path d="M5.05 3.10V6.80" stroke="#2a2a2a" stroke-width="0.9"/></svg>
<span style="top:256.2px;font-size:8.5px;color:#000;transform:translateY(-44%);left:100.5px;letter-spacing:-0.224px;">NFS - Nota Fiscal de Serviço Manual</span>
<svg style="left:90px;top:265px" width="11" height="11"><rect x="1.30" y="1.65" width="7.5" height="7.5" rx="0.8" fill="#f4f3f1" stroke="#a4a3a1" stroke-width="0.9"/><path d="M3.20 5.40H6.90" stroke="#2a2a2a" stroke-width="0.9"/><path d="M5.05 3.55V7.25" stroke="#2a2a2a" stroke-width="0.9"/></svg>
<span style="top:270.65px;font-size:8.5px;color:#000;transform:translateY(-44%);left:100.5px;letter-spacing:-0.235px;">NFSe - Nota Fiscal de Serviço</span>
<span style="top:285.6px;font-size:8.5px;color:#000;transform:translateY(-44%);left:9px;letter-spacing:-0.061px;">Vendas Total</span>
<span style="top:300.2px;font-size:8.5px;color:#000;transform:translateY(-44%);left:9px;letter-spacing:-0.091px;">Grand Total</span>
<svg style="left:734px;top:205px" width="48" height="15"><defs><linearGradient id="b0" x1="0" y1="0" x2="0" y2="1"><stop offset="0" stop-color="#62a8ec"/><stop offset=".36" stop-color="#4a94e4"/><stop offset=".44" stop-color="#115fd0"/><stop offset=".8" stop-color="#0f5acb"/><stop offset="1" stop-color="#2f7cdc"/></linearGradient></defs><rect x="1" y="2.10" width="44.80" height="10.80" fill="url(#b0)"/></svg>
<span style="top:212.9px;font-size:8.5px;color:#000;transform:translate(-100%,-44%);left:569.5px;letter-spacing:-0.036px;">1.048,00</span>
<span style="top:212.9px;font-size:8.5px;color:#000;transform:translate(-100%,-44%);left:650.4px;letter-spacing:0.047px;">-40.113,35</span>
<span style="top:212.9px;font-size:8.5px;color:#000;transform:translate(-100%,-44%);left:731px;letter-spacing:-0.086px;">-R$ 63,813</span>
<span style="top:212.9px;font-size:8.5px;color:#14142c;transform:translate(-100%,-44%);left:786px;letter-spacing:0.126px;">100 %</span>
<svg style="left:734px;top:219px" width="48" height="16"><defs><linearGradient id="b1" x1="0" y1="0" x2="0" y2="1"><stop offset="0" stop-color="#62a8ec"/><stop offset=".36" stop-color="#4a94e4"/><stop offset=".44" stop-color="#115fd0"/><stop offset=".8" stop-color="#0f5acb"/><stop offset="1" stop-color="#2f7cdc"/></linearGradient></defs><rect x="1" y="2.50" width="18.85" height="10.90" fill="url(#b1)"/></svg>
<span style="top:227.35px;font-size:8.5px;color:#000;transform:translate(-100%,-44%);left:569.5px;letter-spacing:-0.053px;">28,00</span>
<span style="top:227.35px;font-size:8.5px;color:#000;transform:translate(-100%,-44%);left:650.4px;letter-spacing:-0.062px;">662,87</span>
<span style="top:227.35px;font-size:8.5px;color:#000;transform:translate(-100%,-44%);left:731px;letter-spacing:-0.122px;">R$ 21,649</span>
<span style="top:227.35px;font-size:8.5px;color:#14142c;transform:translate(-100%,-44%);left:786px;letter-spacing:0.188px;">25 %</span>
<svg style="left:734px;top:234px" width="48" height="15"><defs><linearGradient id="b2" x1="0" y1="0" x2="0" y2="1"><stop offset="0" stop-color="#62a8ec"/><stop offset=".36" stop-color="#4a94e4"/><stop offset=".44" stop-color="#115fd0"/><stop offset=".8" stop-color="#0f5acb"/><stop offset="1" stop-color="#2f7cdc"/></linearGradient></defs><rect x="1" y="2.00" width="42.22" height="10.80" fill="url(#b2)"/></svg>
<span style="top:241.8px;font-size:8.5px;color:#000;transform:translate(-100%,-44%);left:569.5px;letter-spacing:-0.053px;">38,00</span>
<span style="top:241.8px;font-size:8.5px;color:#000;transform:translate(-100%,-44%);left:650.4px;letter-spacing:-0.036px;">1.494,64</span>
<span style="top:241.8px;font-size:8.5px;color:#000;transform:translate(-100%,-44%);left:731px;letter-spacing:-0.122px;">R$ 33,969</span>
<span style="top:241.8px;font-size:8.5px;color:#14142c;transform:translate(-100%,-44%);left:786px;letter-spacing:0.188px;">56 %</span>
<svg style="left:734px;top:248px" width="48" height="15"><defs><linearGradient id="b3" x1="0" y1="0" x2="0" y2="1"><stop offset="0" stop-color="#62a8ec"/><stop offset=".36" stop-color="#4a94e4"/><stop offset=".44" stop-color="#115fd0"/><stop offset=".8" stop-color="#0f5acb"/><stop offset="1" stop-color="#2f7cdc"/></linearGradient></defs><rect x="1" y="2.40" width="14.33" height="10.80" fill="url(#b3)"/></svg>
<span style="top:256.2px;font-size:8.5px;color:#000;transform:translate(-100%,-44%);left:569.5px;letter-spacing:-0.036px;">2,00</span>
<span style="top:256.2px;font-size:8.5px;color:#000;transform:translate(-100%,-44%);left:650.4px;letter-spacing:-0.062px;">510,64</span>
<span style="top:256.2px;font-size:8.5px;color:#000;transform:translate(-100%,-44%);left:731px;letter-spacing:-0.120px;">R$ 255,320</span>
<span style="top:256.2px;font-size:8.5px;color:#14142c;transform:translate(-100%,-44%);left:786px;letter-spacing:0.188px;">19 %</span>
<span style="top:270.65px;font-size:8.5px;color:#000;transform:translate(-100%,-44%);left:569.5px;letter-spacing:-0.036px;">1,00</span>
<span style="top:270.65px;font-size:8.5px;color:#000;transform:translate(-100%,-44%);left:650.4px;letter-spacing:-0.053px;">10,64</span>
<span style="top:270.65px;font-size:8.5px;color:#000;transform:translate(-100%,-44%);left:731px;letter-spacing:-0.122px;">R$ 10,640</span>
<span style="top:270.65px;font-size:8.5px;color:#14142c;transform:translate(-100%,-44%);left:786px;letter-spacing:0.286px;">0 %</span>
<span style="top:285.1px;font-size:8.5px;color:#000;transform:translate(-100%,-44%);left:569.5px;letter-spacing:-0.053px;">69,00</span>
<span style="top:285.1px;font-size:8.5px;color:#000;transform:translate(-100%,-44%);left:650.4px;letter-spacing:-0.036px;">2.678,79</span>
<span style="top:285.1px;font-size:8.5px;color:#000;transform:translate(-100%,-44%);left:731px;letter-spacing:-0.122px;">R$ 35,326</span>
<span style="top:285.1px;font-size:8.5px;color:#14142c;transform:translate(-100%,-44%);left:786px;letter-spacing:0.286px;">0 %</span>
<svg style="left:734px;top:291px" width="48" height="16"><defs><linearGradient id="b6" x1="0" y1="0" x2="0" y2="1"><stop offset="0" stop-color="#62a8ec"/><stop offset=".36" stop-color="#4a94e4"/><stop offset=".44" stop-color="#115fd0"/><stop offset=".8" stop-color="#0f5acb"/><stop offset="1" stop-color="#2f7cdc"/></linearGradient></defs><rect x="1" y="2.70" width="44.80" height="10.80" fill="url(#b6)"/></svg>
<span style="top:299.5px;font-size:8.5px;color:#000;transform:translate(-100%,-44%);left:569.5px;letter-spacing:0.042px;">1.117,00</span>
<span style="top:299.5px;font-size:8.5px;color:#000;transform:translate(-100%,-44%);left:650.4px;letter-spacing:-0.017px;">-37.434,56</span>
<span style="top:299.5px;font-size:8.5px;color:#000;transform:translate(-100%,-44%);left:731px;letter-spacing:-0.122px;">R$ 26,651</span>
<span style="top:299.5px;font-size:8.5px;color:#14142c;transform:translate(-100%,-44%);left:786px;letter-spacing:0.126px;">100 %</span>
</div>
<div  style="left:781px;top:79px;width:13px;height:223px;background:linear-gradient(90deg,#e9e9ec,#f5f5f7 40%,#f0f0f2);"></div>
<div  style="left:781.6px;top:93.6px;width:11px;height:165.2px;background:linear-gradient(90deg,#f4f4f6,#dcdce0 50%,#cfcfd4 55%,#dadade);border:1px solid #b2b2b9;border-radius:2px;box-sizing:border-box"></div>
<div  style="left:785px;top:173.8px;width:4.4px;height:0.8px;background:#85858e"></div>
<div  style="left:785px;top:175.6px;width:4.4px;height:0.8px;background:#85858e"></div>
<div  style="left:785px;top:177.4px;width:4.4px;height:0.8px;background:#85858e"></div>
<svg style="left:784.4px;top:83.5px" width="5.4" height="3.4" viewBox="0 0 5.4 3.4"><path d="M0 3.4H5.4L2.7 0Z" fill="#3c3c46"/></svg>
<svg style="left:784.4px;top:293.3px" width="5.4" height="3.4" viewBox="0 0 5.4 3.4"><path d="M0 0H5.4L2.7 3.4Z" fill="#3c3c46"/></svg>
<div  style="left:7px;top:302px;width:787px;height:12.8px;background:linear-gradient(#e9e9ec,#f5f5f7 40%,#f0f0f2)"></div>
<div  style="left:21px;top:302.6px;width:558.4px;height:11.6px;background:linear-gradient(#f4f4f6,#dcdce0 50%,#cfcfd4 55%,#dadade);border:1px solid #b2b2b9;border-radius:2px;box-sizing:border-box"></div>
<div  style="left:298px;top:306px;width:0.8px;height:4.6px;background:#85858e"></div>
<div  style="left:299.8px;top:306px;width:0.8px;height:4.6px;background:#85858e"></div>
<div  style="left:301.6px;top:306px;width:0.8px;height:4.6px;background:#85858e"></div>
<svg style="left:11px;top:305.6px" width="3.4" height="5.4" viewBox="0 0 3.4 5.4"><path d="M3.4 0V5.4L0 2.7Z" fill="#3c3c46"/></svg>
<svg style="left:771.6px;top:305.6px" width="3.4" height="5.4" viewBox="0 0 3.4 5.4"><path d="M0 0V5.4L3.4 2.7Z" fill="#3c3c46"/></svg>
<div  style="left:781px;top:302px;width:13px;height:12.8px;background:#ececef"></div>
<div  style="left:793px;top:79px;width:1px;height:236px;background:#3a62a8"></div>
<div  style="left:7px;top:314.8px;width:786px;height:6.6px;background:#f7f7fa"></div>
<div  style="left:7px;top:314.8px;width:786px;height:0.8px;background:#6e7c9c"></div>
<div  style="left:282.2px;top:315.6px;width:235.8px;height:5.4px;background:#fff;border:0.8px solid #7a86a0;border-top:none;box-sizing:border-box"></div>
<svg style="left:286.6px;top:317px" width="5.6" height="3.4" viewBox="0 0 5.6 3.4"><path d="M0.4 0.4L2.8 2.8L5.2 0.4" stroke="#111" stroke-width="1.1" fill="none"/></svg>
<svg style="left:508.2px;top:317px" width="5.6" height="3.4" viewBox="0 0 5.6 3.4"><path d="M0.4 0.4L2.8 2.8L5.2 0.4" stroke="#111" stroke-width="1.1" fill="none"/></svg>
<svg style="left:294px;top:317px" width="214" height="3"><path d="M1 1.5H212" stroke="#8e98b6" stroke-width="1" stroke-dasharray="1.1 1.3"/></svg>
<div  style="left:6px;top:322px;width:788px;height:160px;background:#fff;border:1px solid #44587e;border-top:none;box-sizing:border-box"></div>
<div  style="left:7px;top:322px;width:786px;height:17px;background:linear-gradient(#dceafd,#bdd0f8 45%,#86abe7)"></div>
<svg style="left:5px;top:320px" width="790" height="4"><rect x="1.00" y="1.55" width="788.00" height="1.20" rx="0" fill="#56688c"/></svg>
<svg style="left:6px;top:337px" width="788" height="4"><rect x="1.00" y="1.30" width="786.00" height="1.35" rx="0" fill="#57589a"/></svg>
<svg style="left:6px;top:338px" width="788" height="4"><rect x="1.00" y="1.65" width="786.00" height="1.35" rx="0" fill="#fff9ef"/></svg>
<div  style="left:12px;top:324px;width:36px;height:16px;background:linear-gradient(#fff6e0,#ffe6b4 50%,#ffd594)"></div>
<svg style="left:10px;top:322px" width="41" height="19"><path d="M1.7 17.8V2.4H38.3V17.8" fill="none" stroke="#2b3c7c" stroke-width="1"/></svg>
<span style="top:332.3px;font-size:8.5px;color:#000;transform:translateY(-44%);left:14.25px;letter-spacing:-0.207px;">Gráficos</span>
<span style="top:332.3px;font-size:8.5px;color:#000;transform:translateY(-44%);left:52.5px;letter-spacing:-0.190px;">Detalhes Grid</span>
<div  style="left:106.6px;top:325.5px;width:0.8px;height:12.5px;background:#7d9dd8"></div>
<span style="top:332.3px;font-size:8.5px;color:#000;transform:translateY(-44%);left:110.7px;letter-spacing:-0.235px;">Gráfico Detalhes Grid</span>
<svg style="left:13px;top:347px" width="773" height="30"><rect x="1.85" y="1.85" width="769.75" height="26.40" rx="1" fill="#fff" stroke="#6c6c6e" stroke-width="1.3"/></svg>
<span style="top:363px;font-size:8.5px;color:#000;transform:translateY(-44%);left:20.5px;letter-spacing:-0.146px;">Data Levels:</span>
<div  style="left:72.5px;top:355.4px;width:25.1px;height:13.8px;background:#3a8fe8"></div>
<span style="top:362.6px;font-size:8.5px;color:#fff;transform:translateY(-44%);left:75.8px;letter-spacing:-0.117px;">Data</span>
<div  style="left:636.4px;top:350.2px;width:0.8px;height:23.8px;background:repeating-linear-gradient(#9c9c9c 0 1.4px,transparent 1.4px 2.8px)"></div>
<div  style="left:713.4px;top:350.2px;width:0.8px;height:23.8px;background:repeating-linear-gradient(#9c9c9c 0 1.4px,transparent 1.4px 2.8px)"></div>
<div  style="left:640.8px;top:353px;width:68.6px;height:17.8px;background:#9db9f1;border:1px solid #1e3778;box-sizing:border-box"></div>
<span style="top:362px;font-size:8.5px;color:#000;transform:translateY(-44%);left:644.4px;letter-spacing:-0.141px;">Customize Chart</span>
<svg style="left:717.4px;top:356px" width="13" height="12" viewBox="0 0 13 12"><path d="M1 0.5V11H12.5" stroke="#6a6a3a" stroke-width="1" fill="none"/><path d="M1.5 9L4.6 5L7 7.4L11.5 2.2" stroke="#c8a24a" stroke-width=".9" fill="none"/><path d="M1.5 10L5 7.6L8 4L11.5 8" stroke="#7a9ad0" stroke-width=".8" fill="none"/></svg>
<span style="top:362.4px;font-size:8.5px;color:#1428b4;transform:translateY(-44%);left:733px;letter-spacing:-0.262px;text-decoration:underline">Line diagram</span>
<svg style="left:0;top:380px" width="800" height="70" viewBox="0 380 800 70"><path d="M64.5 387.40H603.4" stroke="#e1e1e4" stroke-width="1"/><path d="M64.5 392.88H603.4" stroke="#e1e1e4" stroke-width="1"/><path d="M64.5 398.36H603.4" stroke="#e1e1e4" stroke-width="1"/><path d="M64.5 403.84H603.4" stroke="#e1e1e4" stroke-width="1"/><path d="M64.5 409.32H603.4" stroke="#e1e1e4" stroke-width="1"/><path d="M64.5 414.80H603.4" stroke="#e1e1e4" stroke-width="1"/><path d="M64.5 420.28H603.4" stroke="#e1e1e4" stroke-width="1"/><path d="M64.5 425.76H603.4" stroke="#e1e1e4" stroke-width="1"/><path d="M64.5 431.24H603.4" stroke="#e1e1e4" stroke-width="1"/><path d="M64.5 436.72H603.4" stroke="#e1e1e4" stroke-width="1"/><path d="M64.5 442.20H603.4" stroke="#e1e1e4" stroke-width="1"/><path d="M199.5 387.4V442.2" stroke="#cdcdd0" stroke-width="1"/><path d="M334 387.4V442.2" stroke="#cdcdd0" stroke-width="1"/><path d="M469.5 387.4V442.2" stroke="#cdcdd0" stroke-width="1"/><path d="M603.4 387.4V442.2" stroke="#cdcdd0" stroke-width="1"/><path d="M64.5 386.79999999999995V442.59999999999997" stroke="#8d8d94" stroke-width="1"/><path d="M62.5 387.40H64.5" stroke="#8d8d94" stroke-width="1"/><path d="M62.5 398.36H64.5" stroke="#8d8d94" stroke-width="1"/><path d="M62.5 409.32H64.5" stroke="#8d8d94" stroke-width="1"/><path d="M62.5 420.28H64.5" stroke="#8d8d94" stroke-width="1"/><path d="M62.5 431.24H64.5" stroke="#8d8d94" stroke-width="1"/><path d="M62.5 442.20H64.5" stroke="#8d8d94" stroke-width="1"/><path d="M64.5 436.6L199.5 393L334 392.8L469.5 392.9L603.4 392.8" stroke="#7f9cc6" stroke-width="1" fill="none"/><path d="M132 392.8H537" stroke="#77709f" stroke-width="1.2" fill="none"/><path d="M267 392.6H403" stroke="#9f9cd0" stroke-width="1.5" fill="none"/><path d="M537 392.9H603.4" stroke="#9a7f86" stroke-width="0.9" fill="none"/><path d="M64.5 392.9H132" stroke="#e26a2c" stroke-width="1" fill="none"/><path d="M199.5 392V395" stroke="#2a2a3a" stroke-width="1"/><path d="M334 392V395" stroke="#2a2a3a" stroke-width="1"/><path d="M469.5 392V395" stroke="#2a2a3a" stroke-width="1"/><path d="M603.4 392V395" stroke="#2a2a3a" stroke-width="1"/><path d="M687 416.5H708" stroke="#f3d9a4" stroke-width="1"/><path d="M687 428.5H708" stroke="#8fa7c8" stroke-width="1"/><path d="M687 441.5H708" stroke="#8d6f80" stroke-width="1"/></svg>
<span style="top:388px;font-size:8.5px;color:#000;transform:translate(-100%,-44%);left:56px;letter-spacing:-0.036px;">5.000,00</span>
<span style="top:398.96px;font-size:8.5px;color:#000;transform:translate(-100%,-44%);left:56px;letter-spacing:-0.006px;">-5.000,00</span>
<span style="top:409.92px;font-size:8.5px;color:#000;transform:translate(-100%,-44%);left:56px;letter-spacing:-0.017px;">-15.000,00</span>
<span style="top:420.88px;font-size:8.5px;color:#000;transform:translate(-100%,-44%);left:56px;letter-spacing:-0.017px;">-25.000,00</span>
<span style="top:431.84px;font-size:8.5px;color:#000;transform:translate(-100%,-44%);left:56px;letter-spacing:-0.017px;">-35.000,00</span>
<span style="top:442.8px;font-size:8.5px;color:#000;transform:translate(-100%,-44%);left:56px;letter-spacing:-0.017px;">-45.000,00</span>
<span style="top:456px;font-size:8.5px;color:#000;transform:translateY(-44%);left:22.5px;letter-spacing:-0.200px;">Compras - Entrada NF</span>
<span style="top:469px;font-size:8.5px;color:#000;transform:translateY(-44%);left:158px;letter-spacing:-0.232px;">Vendas - Cupom Fiscal</span>
<span style="top:456px;font-size:8.5px;color:#000;transform:translateY(-44%);left:287.5px;letter-spacing:-0.152px;">Vendas - NF - Nota Fiscal</span>
<span style="top:469px;font-size:8.5px;color:#000;transform:translateY(-44%);left:385.5px;letter-spacing:-0.199px;">Vendas - NFS - Nota Fiscal de Serviço Manual</span>
<span style="top:456px;font-size:8.5px;color:#000;transform:translateY(-44%);left:533px;letter-spacing:-0.217px;">Vendas - NFSe - Nota Fiscal de Serviço</span>
<span style="top:416.8px;font-size:8.5px;color:#000;transform:translateY(-44%);left:713px;letter-spacing:-0.001px;">2012 - qtde</span>
<span style="top:428.4px;font-size:8.5px;color:#000;transform:translateY(-44%);left:713px;letter-spacing:0.020px;">2012 - Total</span>
<span style="top:441px;font-size:8.5px;color:#000;transform:translateY(-44%);left:713px;letter-spacing:-0.149px;">2012 - Valor medio</span>
</div></body></html>
